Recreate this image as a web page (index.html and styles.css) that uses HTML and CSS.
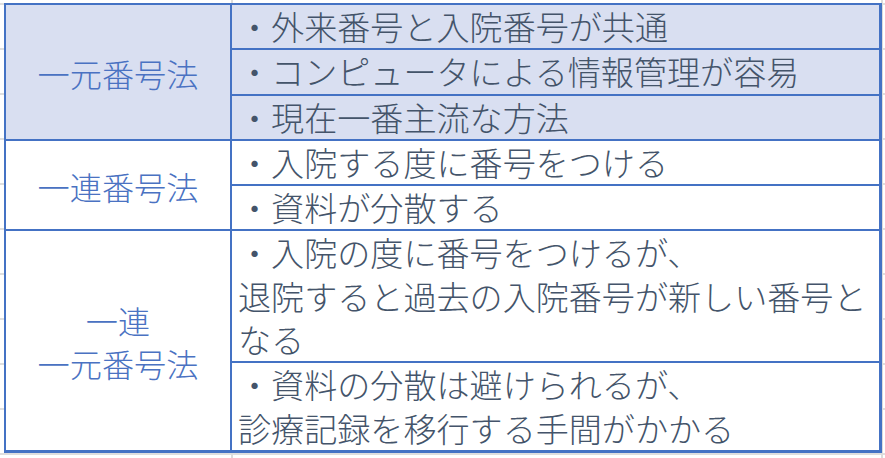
FILE: index.html
```html
<!DOCTYPE html>
<html lang="ja">
<head>
<meta charset="utf-8">
<title>番号法</title>
<link rel="stylesheet" href="styles.css">
</head>
<body>
<div class="sheet">
  <div class="table">
    <div class="group shaded">
      <div class="label">一元番号法</div>
      <div class="items">
        <div class="item">・外来番号と入院番号が共通</div>
        <div class="item">・コンピュータによる情報管理が容易</div>
        <div class="item">・現在一番主流な方法</div>
      </div>
    </div>
    <div class="group">
      <div class="label">一連番号法</div>
      <div class="items">
        <div class="item">・入院する度に番号をつける</div>
        <div class="item">・資料が分散する</div>
      </div>
    </div>
    <div class="group">
      <div class="label">一連<br>一元番号法</div>
      <div class="items">
        <div class="item">・入院の度に番号をつけるが、<br>退院すると過去の入院番号が新しい番号と<br>なる</div>
        <div class="item">・資料の分散は避けられるが、<br>診療記録を移行する手間がかかる</div>
      </div>
    </div>
  </div>
</div>
</body>
</html>
```

FILE: styles.css
```css
html, body {
  margin: 0;
  padding: 0;
}

body {
  min-height: 458px;
  background-color: #ffffff;
  background-image:
    linear-gradient(to right, transparent 231px, #dcdcdc 231px, #dcdcdc 233px, transparent 233px, transparent 881px, #dcdcdc 881px, #dcdcdc 883px, transparent 883px),
    repeating-linear-gradient(to bottom, #dedede 0, #dedede 2px, transparent 2px, transparent 45px);
  background-position: 0 0, 0 3px;
  background-repeat: no-repeat, repeat;
  font-family: "Noto Sans CJK JP", "Noto Sans", sans-serif;
  font-weight: 300;
  font-size: 33.1px;
  line-height: 43.3px;
}

.sheet {
  padding: 3px 0 0 4px;
}

.table {
  width: 878px;
  box-sizing: border-box;
  background: #ffffff;
  border-style: solid;
  border-color: #4472c4;
  border-width: 2px 3px 3px 2px;
}

.group {
  display: grid;
  grid-template-columns: 226px 1fr;
}

.group + .group {
  border-top: 2px solid #4472c4;
}

.shaded {
  background: #d9dff1;
}

.label {
  border-right: 2px solid #4472c4;
  display: flex;
  align-items: center;
  justify-content: center;
  text-align: center;
  color: #4a72c2;
  font-size: 32.2px;
  padding-top: 3px;
}

.items {
  display: flex;
  flex-direction: column;
}

.item {
  padding-left: 6px;
  color: #44546a;
  white-space: nowrap;
}

.item + .item {
  border-top: 2px solid #4472c4;
}
```
